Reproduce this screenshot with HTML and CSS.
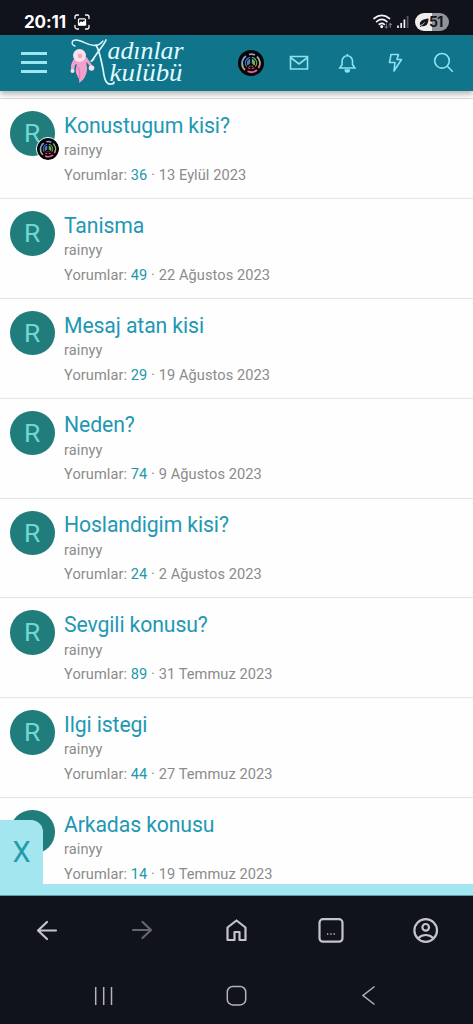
FILE: index.html
```html
<!DOCTYPE html>
<html lang="tr">
<head>
<meta charset="utf-8">
<title>Kadınlar Kulübü</title>
<link rel="stylesheet" href="styles.css">
</head>
<body>
<svg width="0" height="0" class="defs">
  <defs>
    <linearGradient id="rainbow" x1="0" y1="0" x2=".3" y2="1">
      <stop offset="0" stop-color="#b68adb"/><stop offset=".35" stop-color="#6aa6dc"/><stop offset=".6" stop-color="#8cc77c"/><stop offset=".8" stop-color="#e88a82"/><stop offset="1" stop-color="#e0609a"/>
    </linearGradient>
    <symbol id="peace" viewBox="0 0 26 26">
      <circle cx="13" cy="13" r="13" fill="#050306"/>
      <path d="M8 6A9 9 0 0 0 7 20M9.500 21.300A9 9 0 0 0 19 20M20.500 18A9 9 0 0 0 19 6.500M17 5A9 9 0 0 0 11 4.500" fill="none" stroke="url(#rainbow)" stroke-width="1.800"/>
      <circle cx="13" cy="13" r="7" fill="#050306"/>
      <path d="M12.200 6.800A6.200 6.200 0 0 0 8.300 17l3.900-3.800z" fill="#4d79bd"/>
      <path d="M13.800 6.800A6.200 6.200 0 0 1 17.700 17l-3.900-3.800z" fill="#6bac63"/>
      <path d="M12.300 15l-3 3a6 6 0 0 0 3 1.200zM13.700 15l3 3a6 6 0 0 1-3 1.200z" fill="#d4505e"/>
      <circle cx="13" cy="13" r="4.700" fill="none" stroke="#050306" stroke-width="1"/>
    </symbol>
  </defs>
</svg>
<div class="screen">
  <div class="status">
    <span class="clock">20:11</span>
    <svg class="shot" width="16" height="16" viewBox="0 0 16 16" fill="none" stroke="#fff" stroke-width="1.300" stroke-linecap="round"><path d="M1 4.500V3a2 2 0 0 1 2-2h1.500M11.500 1H13a2 2 0 0 1 2 2v1.500M15 11.500V13a2 2 0 0 1-2 2h-1.500M4.500 15H3a2 2 0 0 1-2-2v-1.500"/><rect x="4.500" y="4.800" width="7" height="6.400" rx="1"/><path d="M5 10.500l2-2.500 1.500 1 1.500-1.500 1.500 3z" fill="#fff"/></svg>
    <div class="signals">
      <svg width="20" height="16" viewBox="0 0 20 16" fill="none" stroke="#f2f2f4" stroke-width="1.700" stroke-linecap="round"><path d="M1 4.500c5-4 10.500-4 15.500 0M3.600 7.600c3.500-2.800 7-2.800 10.300 0M6.300 10.300c1.800-1.300 3.500-1.300 5 0"/><circle cx="8.700" cy="12.600" r=".7" fill="#fff"/><path d="M13.300 10v4m-1.400-1.300 1.400 1.400 1.400-1.400M17.300 13.500v-4m-1.400 1.300 1.400-1.400 1.400 1.400" stroke="#8d9096" stroke-width=".9"/></svg>
      <svg width="12" height="14" viewBox="0 0 12 14" stroke-width="1.700" stroke="#f2f2f4"><path d="M1 10.500v2.500M4.200 8v5M7.400 4.500v8.500"/><path d="M10.600 1v12" stroke="#55585e"/></svg>
      <div class="battery"><svg width="10" height="9" viewBox="0 0 10 9"><path d="M1 7.500C0 3 4 1 9.500.5c0 5-2 8.500-6.500 7.500L1 9z" fill="#15171c"/><path d="M1 7.500c2-.5 3.500-1.500 4.500-3" stroke="#eee" stroke-width=".8" fill="none"/></svg><span>51</span></div>
    </div>
  </div>
  <header class="header">
    <svg class="burger" width="26" height="22" viewBox="0 0 26 22" stroke="#9ae7f2" stroke-width="2.800"><path d="M0 1.500h26M0 10.500h26M0 19.500h26"/></svg>
    <svg class="logo" width="118" height="48" viewBox="0 0 118 48">
      <path d="M4 20C1 24 0 29 2 33l2-1 1-6 2-1c-1 4-2 8 0 11 1 3 3 4 2 8 5-3 7-7 8-13 .3-3-1-6-.5-8l4 5 1.500-2-5.500-8z" fill="#f3a1cc"/>
      <circle cx="9.500" cy="16.500" r="6.500" fill="#fae0eb"/><circle cx="10" cy="17" r="2.300" fill="#f3a5c9"/>
      <path d="M8 28c2 4 2 8 1.500 12" stroke="#e070ae" stroke-width=".9" fill="none"/>
      <circle cx="21.500" cy="29" r="2.800" fill="#fae0eb"/><circle cx="2.500" cy="32" r="2" fill="#fae0eb"/>
      <g fill="none" stroke="#d9f8fc" stroke-linecap="round"><path d="M5 7C1 6 1 1 6 1c7 0 11 6 19 5.500 4 0 6-2 8-4.500" stroke-width="1.300"/><path d="M36 1C34 6 26 15 22 22" stroke-width="1.700"/><path d="M26 6c4 7 5 15 7 24 1 7 2 16 8 15 2 0 3-1 3-2" stroke-width="1.700"/><path d="M21 22l3-2" stroke-width="1.400"/></g>
      <g class="wordmark"><text x="37.500" y="20" textLength="76" lengthAdjust="spacingAndGlyphs">adınlar</text><text x="39.500" y="42" textLength="73" lengthAdjust="spacingAndGlyphs">kulübü</text></g>
    </svg>
    <nav class="tools">
      <svg width="26" height="26"><use href="#peace"/></svg>
      <svg width="26" height="26" viewBox="0 0 26 26"><path d="M4.500 6.500h17v12.500h-17zM4.500 7.500l8.500 6.500 8.500-6.500"/></svg>
      <svg width="26" height="26" viewBox="0 0 26 26"><path d="M4.800 18h15l-2.300-3.500v-3.500a5.200 5.200 0 0 0-10.400 0v3.500zM12.300 5.500V4"/><path d="M10.300 20a2 2 0 0 0 4 0z" fill="#8be3f1"/></svg>
      <svg width="26" height="26" viewBox="0 0 26 26"><path d="M8 4.500h7.500l-1.500 5h4.500l-7.500 11.500 1-8.500H6.500z" stroke-linejoin="round"/></svg>
      <svg width="26" height="26" viewBox="0 0 26 26"><circle cx="11" cy="10.800" r="7.300"/><path d="M16.300 16.200l5.500 5.500"/></svg>
    </nav>
  </header>
  <main class="list">
    <article class="row"><div class="avatar">R<svg class="badge" width="24" height="24"><use href="#peace"/></svg></div><div><h3>Konustugum kisi?</h3><p class="user">rainyy</p><p class="meta">Yorumlar: <b>36</b> · 13 Eylül 2023</p></div></article>
    <article class="row"><div class="avatar">R</div><div><h3>Tanisma</h3><p class="user">rainyy</p><p class="meta">Yorumlar: <b>49</b> · 22 Ağustos 2023</p></div></article>
    <article class="row"><div class="avatar">R</div><div><h3>Mesaj atan kisi</h3><p class="user">rainyy</p><p class="meta">Yorumlar: <b>29</b> · 19 Ağustos 2023</p></div></article>
    <article class="row"><div class="avatar">R</div><div><h3>Neden?</h3><p class="user">rainyy</p><p class="meta">Yorumlar: <b>74</b> · 9 Ağustos 2023</p></div></article>
    <article class="row"><div class="avatar">R</div><div><h3>Hoslandigim kisi?</h3><p class="user">rainyy</p><p class="meta">Yorumlar: <b>24</b> · 2 Ağustos 2023</p></div></article>
    <article class="row"><div class="avatar">R</div><div><h3>Sevgili konusu?</h3><p class="user">rainyy</p><p class="meta">Yorumlar: <b>89</b> · 31 Temmuz 2023</p></div></article>
    <article class="row"><div class="avatar">R</div><div><h3>Ilgi istegi</h3><p class="user">rainyy</p><p class="meta">Yorumlar: <b>44</b> · 27 Temmuz 2023</p></div></article>
    <article class="row"><div class="avatar"></div><div><h3>Arkadas konusu</h3><p class="user">rainyy</p><p class="meta">Yorumlar: <b>14</b> · 19 Temmuz 2023</p></div></article>
    <div class="close">X</div>
  </main>
  <div class="strip"></div>
  <footer class="bottom">
    <div class="browser">
      <svg width="26" height="26" viewBox="0 0 26 26"><path d="M22 12.500H4M13 4l-9 8.500 9 8.500"/></svg>
      <svg class="dim" width="26" height="26" viewBox="0 0 26 26"><path d="M4 12h18M13.500 4l8.500 8-8.500 8"/></svg>
      <svg width="26" height="26" viewBox="0 0 26 26"><path d="M3.500 9.500l9-7 9 7v12.500h-6v-8h-5v8h-7z"/></svg>
      <svg width="26" height="26" viewBox="0 0 26 26"><rect x="1.500" y="1.200" width="23" height="22.500" rx="3.500"/><path d="M9 16h1.300M12.300 16h1.300M15.600 16h1.300" stroke-width="1.300" stroke-linecap="butt"/></svg>
      <svg width="26" height="26" viewBox="0 0 26 26"><circle cx="12.700" cy="12.500" r="11.300"/><circle cx="12.700" cy="9.300" r="3.300"/><path d="M5.500 20c4-4 10.500-4 14.500 0"/></svg>
    </div>
    <div class="system">
      <svg width="20" height="22" viewBox="0 0 20 22"><path d="M1.700 2v18M9.700 2v18M17.500 2v18"/></svg>
      <svg width="20" height="22" viewBox="0 0 20 22"><rect x=".3" y="1.500" width="18.400" height="18.400" rx="5.500"/></svg>
      <svg width="20" height="22" viewBox="0 0 20 22"><path d="M15.500 1.500L4 10.500l11.500 9"/></svg>
    </div>
  </footer>
</div>
</body>
</html>
```

FILE: styles.css
```css
* { box-sizing: border-box; }
body { margin: 0; font-family: Roboto, sans-serif; background: #10131c; }
.defs { position: absolute; }
.screen { width: 473px; height: 1024px; display: flex; flex-direction: column; overflow: hidden; }
svg { display: block; flex: none; overflow: visible; }
.status { height: 35px; flex: none; background: #10131c; display: flex; align-items: center; padding: 9px 24px 0; }
.clock { color: #fff; font: 700 17px/20px Inter, sans-serif; width: 42px; white-space: nowrap; letter-spacing: -.1px; }
.shot { margin-left: 8px; }
.signals { margin-left: auto; display: flex; align-items: center; gap: 4px; }
.battery { width: 34px; height: 18px; border-radius: 9px; margin-left: 2px; background: linear-gradient(90deg, #eeeeef 51%, #929397 51%); display: flex; align-items: center; padding-left: 4px; color: #15171c; font: 700 14px/18px Inter, sans-serif; letter-spacing: -.8px; }
.header { height: 56px; flex: none; background: #10748b; box-shadow: 0 3px 6px rgba(0,0,0,.3); display: flex; align-items: flex-start; padding: 4px 16px 0 21px; position: relative; z-index: 1; }
.burger { margin-top: 13px; }
.logo { margin-left: 23px; }
.wordmark { font: italic 25px "Liberation Serif", serif; fill: #e0fbff; }
.tools { margin: 11px 0 0 auto; display: flex; gap: 22.2px; fill: none; stroke: #8be3f1; stroke-width: 1.6; }
.tools use { stroke: none; }
.list { flex: 1; min-height: 0; overflow: hidden; background: #fefefe; position: relative; padding-top: 7px; }
.list::before { content: ""; display: block; height: 1px; margin-bottom: .2px; background: #dcdcdc; }
.row { height: 99.83px; border-bottom: 1px solid #e5e5e5; padding: 12px 10px 0; display: grid; grid-template-columns: 44px 1fr; gap: 10px; align-items: start; }
.avatar { width: 44.5px; height: 44.5px; border-radius: 50%; background: #217d7b; color: #70d8d4; font-size: 26.5px; line-height: 43.5px; text-align: center; position: relative; }
.badge { position: absolute; left: 26px; top: 26px; border: 1px solid #fff; border-radius: 50%; overflow: hidden; }
h3, p { margin: 0; font-weight: 400; white-space: nowrap; }
h3 { color: #2198b3; font-size: 21.2px; line-height: 28px; padding-top: .8px; letter-spacing: -.1px; }
p { color: #8b8b8b; font-size: 14.6px; line-height: 24px; letter-spacing: .08px; }
.user { margin-top: -1.5px; margin-bottom: .5px; }
b { color: #2198a9; font-weight: 400; }
.close { position: absolute; left: 0; bottom: 0; width: 43px; height: 64px; border-radius: 0 12px 0 0; background: #a3e6ef; color: #239bab; font-size: 29px; line-height: 64px; text-align: center; }
.strip { height: 12px; flex: none; background: #a3e6ef; border-bottom: 1px solid #5f9ba5; }
.bottom { height: 128px; flex: none; background: #10131c; }
.browser { height: 70px; display: flex; justify-content: space-between; align-items: center; padding: 0 34px; fill: none; stroke: #c3c4cf; stroke-width: 2.2; stroke-linecap: round; stroke-linejoin: round; }
.dim { stroke: #66676c; }
.system { height: 58px; display: flex; justify-content: space-between; padding: 19px 94px 0; fill: none; stroke: #b3b4ba; stroke-width: 1.5; }
```
